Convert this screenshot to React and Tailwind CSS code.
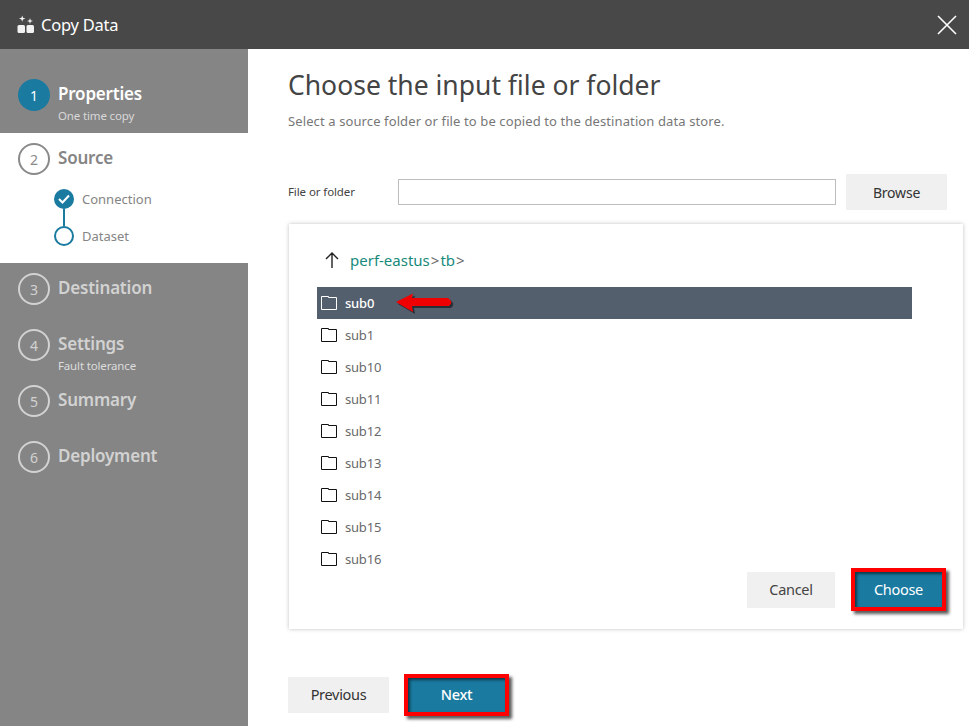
import React from "react";

const font = { fontFamily: '"Noto Sans", "Open Sans", sans-serif' };

function Circle({ n, active, dark }) {
  if (active)
    return (
      <div className="w-8 h-8 rounded-full bg-[#1a7aa0] flex items-center justify-center text-white text-[14px] shrink-0">
        {n}
      </div>
    );
  return (
    <div
      className={
        dark
          ? "w-8 h-8 rounded-full border-2 border-[#8a8a8a] text-[#8a8a8a] flex items-center justify-center text-[14px] shrink-0"
          : "w-8 h-8 rounded-full border-2 border-[#d2d2d2] text-[#d2d2d2] flex items-center justify-center text-[14px] shrink-0"
      }
    >
      {n}
    </div>
  );
}

function Step({ n, title, sub }) {
  return (
    <div className="h-[56px] flex pl-[18px] gap-[8px]">
      <Circle n={n} />
      <div className="pt-[2px]">
        <div className="text-[17px] leading-[26px] font-semibold text-[#d2d2d2] tracking-[-0.2px]">{title}</div>
        {sub && <div className="text-[11.5px] leading-[14px] mt-[2px] text-[#dcdcdc] tracking-[-0.15px]">{sub}</div>}
      </div>
    </div>
  );
}

function Folder({ white }) {
  const c = white ? "#ffffff" : "#111111";
  return (
    <svg width="16" height="14" viewBox="0 0 16 14" fill="none" className="shrink-0">
      <path d="M.5 13.5V.5H7.5V1.5H15.5V13.5Z" stroke={c} />
    </svg>
  );
}

function Row({ name, selected }) {
  return (
    <div
      className={
        selected
          ? "h-8 flex items-center pl-1 gap-2 bg-[#535f6d] text-white font-medium text-[13px]"
          : "h-8 flex items-center pl-1 gap-2 text-[#6a6a6a] text-[13px]"
      }
    >
      <Folder white={selected} />
      <span className="tracking-[-0.2px] pt-[2px]">{name}</span>
    </div>
  );
}

function Annotated({ className, children }) {
  return (
    <button
      className={
        "border-[4px] border-[#ff0000] bg-[#1a7aa0] text-white shadow-[inset_2px_2px_3px_rgba(0,0,0,0.55),3px_3px_3px_rgba(0,0,0,0.65)] flex items-center justify-center text-[14.5px] tracking-[-0.3px] " +
        className
      }
    >
      {children}
    </button>
  );
}

export default function App() {
  return (
    <div style={font} className="w-[969px] h-[726px] flex flex-col bg-white overflow-hidden">
      <header className="h-[49px] bg-[#484848] flex items-center justify-between pl-[17px] pr-[11px] shrink-0">
        <div className="flex items-center gap-[6px] text-white">
          <svg width="18" height="19" viewBox="0 0 18 19" fill="#f2f2f2">
            <path d="M4 0.5 5 3.5 8 4.5 5 5.5 4 8.5 3 5.5 0 4.5 3 3.5Z" transform="translate(2 0) scale(.8)" />
            <path d="M13 3 13.7 5.3 16 6 13.7 6.7 13 9 12.3 6.7 10 6 12.3 5.3Z" />
            <rect x="0.5" y="10" width="7.5" height="8" rx="1.5" />
            <rect x="9.5" y="10" width="7.5" height="8" rx="1.5" />
          </svg>
          <span className="text-[16.5px] tracking-[-0.25px] pt-[2px]">Copy Data</span>
        </div>
        <svg width="22" height="22" viewBox="0 0 22 22" stroke="#fff" strokeWidth="1.6">
          <path d="M2 2 20 20M20 2 2 20" />
        </svg>
      </header>

      <div className="flex flex-1 min-h-0">
        <aside className="w-[248px] shrink-0 bg-[#858585] flex flex-col">
          <div className="h-[84px] pt-[30px] pl-[18px] flex gap-[8px] shrink-0">
            <Circle n={1} active />
            <div>
              <div className="text-[17px] leading-[26px] mt-[2px] font-semibold text-white tracking-[-0.2px]">Properties</div>
              <div className="text-[11.5px] leading-[14px] mt-[2px] text-[#d8d8d8] tracking-[-0.15px]">One time copy</div>
            </div>
          </div>

          <div className="h-[130px] bg-white pt-[10px] mb-[10px] shrink-0">
            <div className="flex pl-[18px] gap-[8px] items-start">
              <Circle n={2} dark />
              <div className="text-[17px] leading-[26px] pt-[2px] font-semibold text-[#858585] tracking-[-0.2px]">Source</div>
            </div>
            <div className="pl-[54px] pt-[14px] flex items-start gap-[8px]">
              <div className="flex flex-col items-center">
                <div className="w-5 h-5 rounded-full bg-[#1a7aa0] flex items-center justify-center">
                  <svg width="12" height="10" viewBox="0 0 12 10" fill="none" stroke="#fff" strokeWidth="2">
                    <path d="M1 5 4.5 8.5 11 1.5" />
                  </svg>
                </div>
                <div className="w-[2px] h-[17px] bg-[#1a7aa0]" />
                <div className="w-5 h-5 rounded-full border-2 border-[#1a7aa0]" />
              </div>
              <div className="text-[13px] text-[#858585]">
                <div className="leading-[20px]">Connection</div>
                <div className="leading-[20px] mt-[17px]">Dataset</div>
              </div>
            </div>
          </div>

          <Step n={3} title="Destination" />
          <Step n={4} title="Settings" sub="Fault tolerance" />
          <Step n={5} title="Summary" />
          <Step n={6} title="Deployment" />
        </aside>

        <main className="flex-1 min-w-0 pl-[40px] relative">
          <h1 className="text-[26.5px] leading-[36px] pt-[18px] h-[54px] box-content text-[#444] font-normal">
            Choose the input file or folder
          </h1>
          <p className="text-[13px] leading-[18px] -mt-[9px] text-[#777] tracking-[0.11px]">
            Select a source folder or file to be copied to the destination data store.
          </p>

          <div className="flex items-center mt-[44px] h-[36px]">
            <label className="w-[110px] text-[11.5px] text-[#444] tracking-[-0.1px] -mt-[1px]">File or folder</label>
            <div className="w-[438px] h-[26px] border border-[#bdbdbd]" />
            <button className="ml-[10px] w-[101px] h-[36px] bg-[#f0f0f0] text-[14px] text-[#333] tracking-[-0.2px]">
              Browse
            </button>
          </div>

          <section className="relative ml-[1px] mt-[14px] w-[674px] h-[405px] bg-white shadow-[0_0_4px_rgba(0,0,0,0.25)] pl-[28px] pr-[51px] pt-[21px]">
            <div className="flex items-center h-[30px] text-[15px]">
              <svg width="16" height="18" viewBox="0 0 16 18" fill="none" stroke="#222" strokeWidth="1.4" className="ml-[7px] mr-[10px]">
                <path d="M8 17V2M2 8 8 2 14 8" />
              </svg>
              <span className="text-[#178a7c]">perf-eastus</span>
              <span className="text-[#666] ml-[1px] mr-[1px]">&gt;</span>
              <span className="text-[#178a7c]">tb</span>
              <span className="text-[#666] ml-[1px]">&gt;</span>
            </div>
            <div className="mt-[12px]">
              <Row name="sub0" selected />
              {["sub1", "sub10", "sub11", "sub12", "sub13", "sub14", "sub15", "sub16"].map((n) => (
                <Row key={n} name={n} />
              ))}
            </div>
            <svg width="64" height="24" viewBox="0 0 64 24" className="absolute left-[105px] top-[68px]">
              <path d="M4 12 L21 3.5 L20 8 L56 8 Q62 12 57 16 L20 16 L21 22 Z" fill="#000" opacity=".5" />
              <path d="M2 10 L19 1.5 L18 6 L54 6 Q60 10 55 14 L18 14 L19 20 Z" fill="#f00000" />
            </svg>
            <div className="absolute left-[458px] top-[344px] flex items-center gap-[16px]">
              <button className="w-[88px] h-[36px] bg-[#f0f0f0] text-[14.5px] text-[#444] tracking-[-0.3px]">Cancel</button>
              <Annotated className="w-[95px] h-[43px]">Choose</Annotated>
            </div>
          </section>

          <div className="flex items-center gap-[15px] mt-[45px]">
            <button className="w-[101px] h-[36px] bg-[#f0f0f0] text-[14.5px] text-[#333] tracking-[-0.3px]">Previous</button>
            <Annotated className="w-[105px] h-[42px] font-medium">Next</Annotated>
          </div>
        </main>
      </div>
    </div>
  );
}
